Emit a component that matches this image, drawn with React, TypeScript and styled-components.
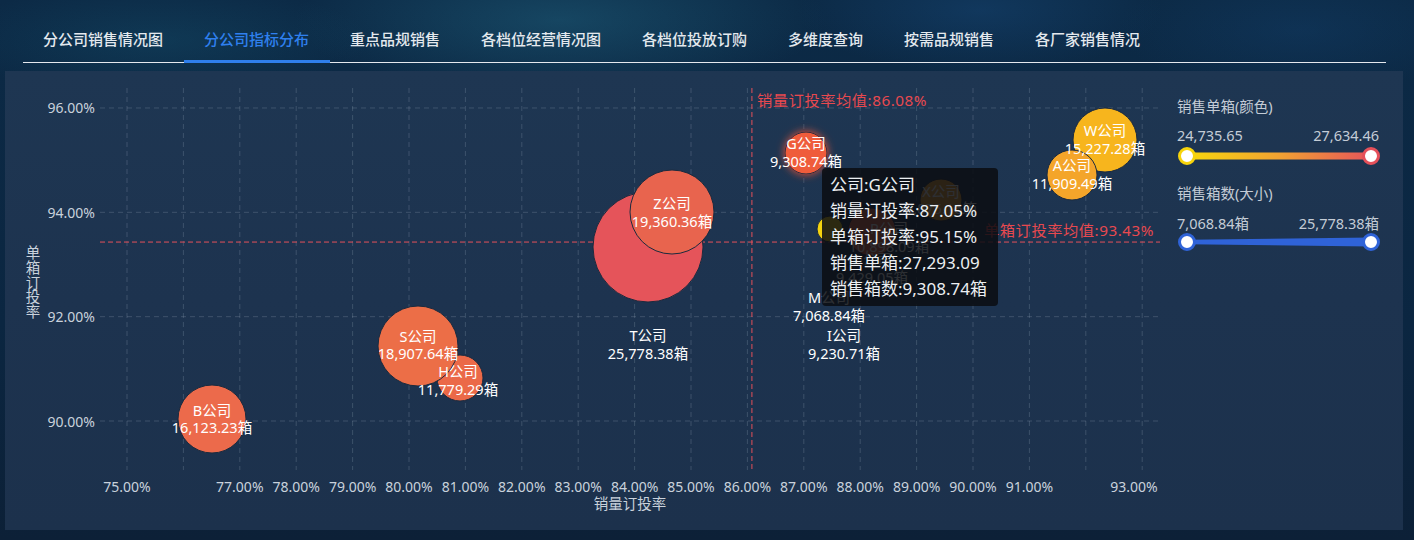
import React from 'react';
import styled, { createGlobalStyle } from 'styled-components';

const GlobalStyle = createGlobalStyle`
  html, body { margin: 0; padding: 0; }
  body {
    width: 1414px;
    height: 540px;
    overflow: hidden;
    font-family: "Noto Sans", "Noto Sans CJK SC", sans-serif;
    background:
      radial-gradient(ellipse 380px 110px at 560px 20px, rgba(34, 104, 132, 0.45), transparent 70%),
      radial-gradient(ellipse 260px 90px at 980px 10px, rgba(24, 76, 128, 0.40), transparent 70%),
      radial-gradient(ellipse 300px 80px at 160px 40px, rgba(22, 84, 112, 0.35), transparent 70%),
      radial-gradient(ellipse 260px 90px at 1300px 30px, rgba(20, 66, 112, 0.35), transparent 70%),
      linear-gradient(180deg, #0c2a46 0%, #0b2641 60%, #0c2037 100%);
  }
`;

const Page = styled.div`
  width: 1414px;
  height: 540px;
  display: flex;
  flex-direction: column;
`;

const Nav = styled.nav`
  display: flex;
  margin: 0 28px 0 22.5px;
  border-bottom: 1px solid #e4e8ee;
`;

const Tab = styled.div<{ $active?: boolean }>`
  box-sizing: border-box;
  height: ${p => (p.$active ? 63 : 62)}px;
  margin-bottom: ${p => (p.$active ? -1 : 0)}px;
  padding: 28px 20.5px 0;
  font-size: 15px;
  line-height: 22px;
  font-weight: 500;
  white-space: nowrap;
  color: ${p => (p.$active ? '#2f80ee' : '#e4e9ee')};
  border-bottom: ${p => (p.$active ? '3px solid #2f7fec' : 'none')};
`;

const Panel = styled.section`
  margin: 8px 0 0 5px;
  width: 1398px;
  height: 459px;
  display: flex;
  background: linear-gradient(180deg, #1e3652 0%, #1d334f 50%, #1c314c 100%);
`;

const ChartBox = styled.div`
  position: relative;
  width: 1160px;
  height: 459px;
  flex: none;
`;

const Tooltip = styled.div`
  position: absolute;
  left: 817px;
  top: 97px;
  width: 176px;
  box-sizing: border-box;
  padding: 4px 8px;
  border-radius: 4px;
  background: rgba(10, 13, 17, 0.86);
  color: #eceff2;
  font-size: 17px;
  line-height: 26px;
  white-space: nowrap;
`;

const Legend = styled.aside`
  width: 203px;
  margin-left: 12px;
  padding-top: 25px;
  display: flex;
  flex-direction: column;
  color: #c4ccd6;
  font-size: 14.5px;
`;

const LegendTitle = styled.div<{ $gap: number }>`
  line-height: 20px;
  margin-top: ${p => p.$gap}px;
`;

const RangeRow = styled.div<{ $gap: number }>`
  display: flex;
  justify-content: space-between;
  line-height: 20px;
  margin-top: ${p => p.$gap}px;
  padding-right: 1px;
`;

const SliderSvg = styled.svg<{ $gap: number }>`
  display: block;
  margin-top: ${p => p.$gap}px;
`;

const X = (v: number) => 127 + (v - 75) * 56.4;
const Y = (v: number) => 421 - (v - 90) * 52.17;

const tabs = ['分公司销售情况图', '分公司指标分布', '重点品规销售', '各档位经营情况图', '各档位投放订购', '多维度查询', '按需品规销售', '各厂家销售情况'];

type Bubble = { cx: number; cy: number; r: number; fill: string; glow?: boolean };
const bubbles: Bubble[] = [
  { cx: 212, cy: 419, r: 34, fill: '#ec6a4b' },
  { cx: 460, cy: 378, r: 23, fill: '#eb6948' },
  { cx: 418, cy: 346, r: 40, fill: '#ec6e47' },
  { cx: 648, cy: 247, r: 55, fill: '#e5545a' },
  { cx: 672, cy: 212, r: 42, fill: '#e8644e' },
  { cx: 872, cy: 232, r: 24, fill: '#ea6a48' },
  { cx: 830, cy: 229, r: 13, fill: '#f5d40f' },
  { cx: 941, cy: 200, r: 21, fill: '#f0a02f' },
  { cx: 1105, cy: 140, r: 32, fill: '#f7b51d' },
  { cx: 1072, cy: 175, r: 25, fill: '#f4a52a' },
  { cx: 806, cy: 153, r: 21, fill: '#ef5b3b', glow: true },
];

type Label = { x: number; y1: number; y2: number; name: string; value: string };
const labels: Label[] = [
  { x: 212, y1: 410, y2: 427, name: 'B公司', value: '16,123.23箱' },
  { x: 418, y1: 336, y2: 353, name: 'S公司', value: '18,907.64箱' },
  { x: 458, y1: 371, y2: 389, name: 'H公司', value: '11,779.29箱' },
  { x: 648, y1: 335, y2: 353, name: 'T公司', value: '25,778.38箱' },
  { x: 672, y1: 203, y2: 221, name: 'Z公司', value: '19,360.36箱' },
  { x: 941, y1: 191, y2: 208, name: 'X公司', value: '9,875.16箱' },
  { x: 889, y1: 228, y2: 246, name: 'P公司', value: '10,898.09箱' },
  { x: 872, y1: 259, y2: 277, name: 'D公司', value: '9,429.05箱' },
  { x: 829, y1: 297, y2: 315, name: 'M公司', value: '7,068.84箱' },
  { x: 844, y1: 335, y2: 353, name: 'I公司', value: '9,230.71箱' },
  { x: 1105, y1: 130, y2: 148, name: 'W公司', value: '15,227.28箱' },
  { x: 1072, y1: 165, y2: 183, name: 'A公司', value: '11,909.49箱' },
  { x: 806, y1: 143, y2: 161, name: 'G公司', value: '9,308.74箱' },
];

const xTicks = Array.from({ length: 19 }, (_, i) => 75 + i);
const xLabelTicks = [75, 77, 78, 79, 80, 81, 82, 83, 84, 85, 86, 87, 88, 89, 90, 91];
const yTicks = [96, 94, 92, 90];

const Chart: React.FC = () => (
  <svg width={1160} height={459} viewBox="5 71 1160 459" style={{ display: 'block' }}>
    <defs>
      <filter id="glow" x="-1" y="-1" width="3" height="3">
        <feDropShadow dx="0" dy="0" stdDeviation="4" floodColor="#ff5a36" floodOpacity="0.85" />
      </filter>
    </defs>
    <g stroke="rgba(190,205,222,0.2)" strokeWidth={1} strokeDasharray="5 4">
      {xTicks.map(t => (
        <line key={t} x1={X(t)} x2={X(t)} y1={88} y2={470} />
      ))}
      {yTicks.map(t => (
        <line key={t} x1={100} x2={1160} y1={Y(t)} y2={Y(t)} />
      ))}
    </g>
    <g fill="#c9d2dc" fontSize={14} fontFamily='"Noto Sans", "Noto Sans CJK SC", sans-serif'>
      {yTicks.map(t => (
        <text key={t} x={95} y={Y(t)} textAnchor="end" dominantBaseline="central">
          {t.toFixed(2)}%
        </text>
      ))}
      {xLabelTicks.map(t => (
        <text key={t} x={X(t)} y={486} textAnchor="middle" dominantBaseline="central">
          {t.toFixed(2)}%
        </text>
      ))}
      <text x={1134} y={486} textAnchor="middle" dominantBaseline="central">93.00%</text>
      <text x={630} y={503} textAnchor="middle" dominantBaseline="central" fontSize={14.5}>销量订投率</text>
      <text x={33} textAnchor="middle" dominantBaseline="central" fontSize={14.5}>
        {['单', '箱', '订', '投', '率'].map((c, i) => (
          <tspan key={c} x={33} y={252 + i * 14.8}>{c}</tspan>
        ))}
      </text>
    </g>
    <g stroke="#e4505a" strokeWidth={1} strokeDasharray="5 3">
      <line x1={X(86.08)} x2={X(86.08)} y1={88} y2={470} />
      <line x1={100} x2={1160} y1={Y(93.43)} y2={Y(93.43)} />
    </g>
    <g fill="#e8494f" fontSize={15.3} letterSpacing={0.5} fontFamily='"Noto Sans", "Noto Sans CJK SC", sans-serif'>
      <text x={757} y={100} dominantBaseline="central">销量订投率均值:86.08%</text>
      <text x={1154} y={230} textAnchor="end" dominantBaseline="central">单箱订投率均值:93.43%</text>
    </g>
    <g stroke="#1b2a3e" strokeWidth={1}>
      {bubbles.map((b, i) => (
        <circle key={i} cx={b.cx} cy={b.cy} r={b.r} fill={b.fill} filter={b.glow ? 'url(#glow)' : undefined} />
      ))}
    </g>
    <g fill="#ffffff" fontSize={14.5} textAnchor="middle" fontFamily='"Noto Sans", "Noto Sans CJK SC", sans-serif'>
      {labels.map(l => (
        <g key={l.name}>
          <text x={l.x} y={l.y1} dominantBaseline="central">{l.name}</text>
          <text x={l.x} y={l.y2} dominantBaseline="central">{l.value}</text>
        </g>
      ))}
    </g>
  </svg>
);

const ColorSlider: React.FC<{ gap: number }> = ({ gap }) => (
  <SliderSvg $gap={gap} width={203} height={20} viewBox="0 0 203 20">
    <defs>
      <linearGradient id="colorBar" x1="0" x2="1" y1="0" y2="0">
        <stop offset="0" stopColor="#f8d80c" />
        <stop offset="0.5" stopColor="#f1a232" />
        <stop offset="1" stopColor="#e6545a" />
      </linearGradient>
    </defs>
    <rect x={10} y={6.5} width={184} height={7} fill="url(#colorBar)" />
    <circle cx={10} cy={10} r={7.5} fill="#ffffff" stroke="#f7d40c" strokeWidth={3} />
    <circle cx={194} cy={10} r={7.5} fill="#ffffff" stroke="#e5505a" strokeWidth={3} />
  </SliderSvg>
);

const SizeSlider: React.FC<{ gap: number }> = ({ gap }) => (
  <SliderSvg $gap={gap} width={203} height={20} viewBox="0 0 203 20">
    <polygon points="10,7.8 194,5.5 194,14.5 10,12.2" fill="#2f63d8" />
    <circle cx={10} cy={10} r={7.5} fill="#ffffff" stroke="#2f63d8" strokeWidth={3} />
    <circle cx={194} cy={10} r={7.5} fill="#ffffff" stroke="#2f63d8" strokeWidth={3} />
  </SliderSvg>
);

export default function App() {
  return (
    <>
      <GlobalStyle />
      <Page>
        <Nav>
          {tabs.map((t, i) => (
            <Tab key={t} $active={i === 1}>{t}</Tab>
          ))}
        </Nav>
        <Panel>
          <ChartBox>
            <Chart />
            <Tooltip>
              <div>公司:G公司</div>
              <div>销量订投率:87.05%</div>
              <div>单箱订投率:95.15%</div>
              <div>销售单箱:27,293.09</div>
              <div>销售箱数:9,308.74箱</div>
            </Tooltip>
          </ChartBox>
          <Legend>
            <LegendTitle $gap={0}>销售单箱(颜色)</LegendTitle>
            <RangeRow $gap={9}>
              <span>24,735.65</span>
              <span>27,634.46</span>
            </RangeRow>
            <ColorSlider gap={1} />
            <LegendTitle $gap={17}>销售箱数(大小)</LegendTitle>
            <RangeRow $gap={10}>
              <span>7,068.84箱</span>
              <span>25,778.38箱</span>
            </RangeRow>
            <SizeSlider gap={-1} />
          </Legend>
        </Panel>
      </Page>
    </>
  );
}
